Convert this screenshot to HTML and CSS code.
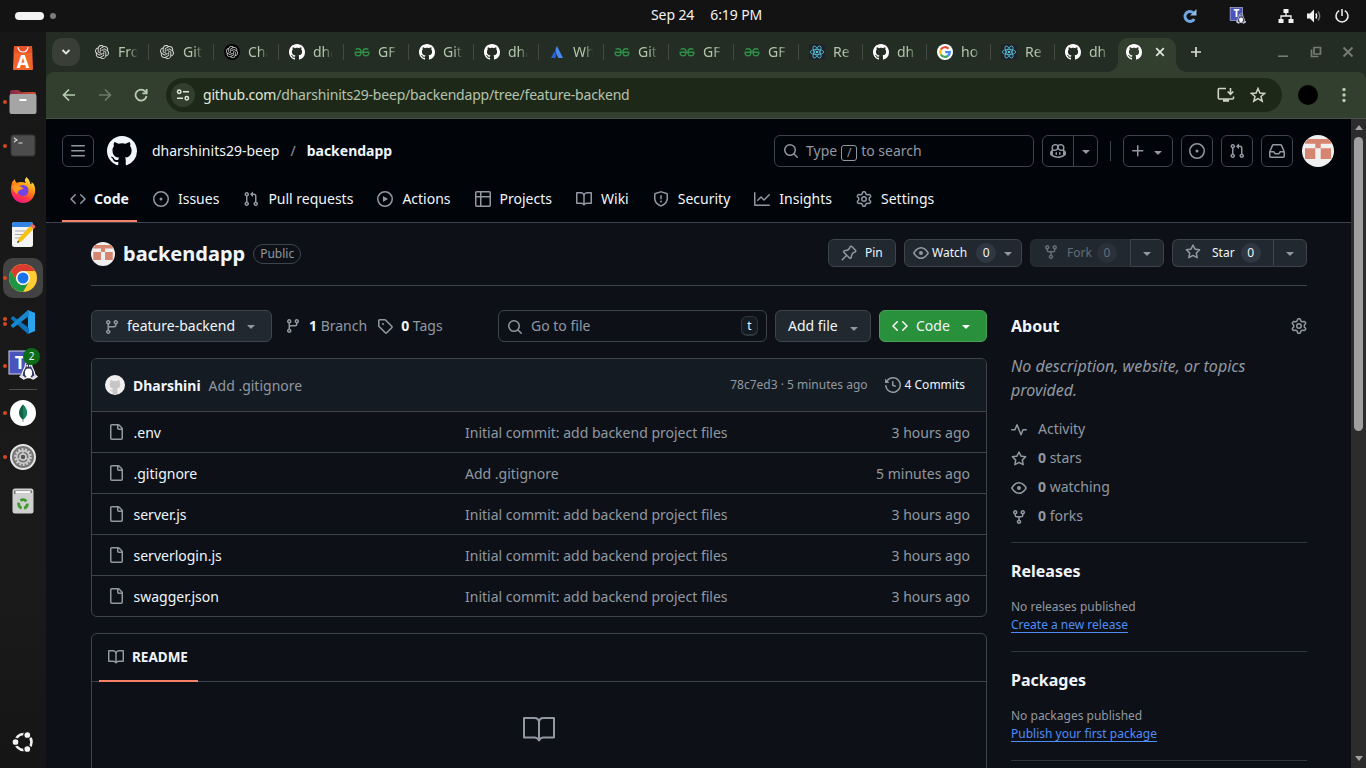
FILE: index.html
```html
<!DOCTYPE html>
<html lang="en">
<head>
<meta charset="utf-8">
<title>backendapp</title>
<link rel="stylesheet" href="styles.css">
</head>
<body>
<svg class="sprite" width="0" height="0">
<symbol id="mark" viewBox="0 0 16 16"><path d="M8 0C3.58 0 0 3.58 0 8c0 3.54 2.29 6.53 5.47 7.59.4.07.55-.17.55-.38 0-.19-.01-.82-.01-1.49-2.01.37-2.53-.49-2.69-.94-.09-.23-.48-.94-.82-1.13-.28-.15-.68-.52-.01-.53.63-.01 1.08.58 1.23.82.72 1.21 1.87.87 2.33.66.07-.52.28-.87.51-1.07-1.78-.2-3.64-.89-3.64-3.95 0-.87.31-1.59.82-2.15-.08-.2-.36-1.02.08-2.12 0 0 .67-.21 2.2.82.64-.18 1.32-.27 2-.27.68 0 1.36.09 2 .27 1.53-1.04 2.2-.82 2.2-.82.44 1.1.16 1.92.08 2.12.51.56.82 1.27.82 2.15 0 3.07-1.87 3.75-3.65 3.95.29.25.54.73.54 1.48 0 1.07-.01 1.93-.01 2.2 0 .21.15.46.55.38A8.01 8.01 0 0 0 16 8c0-4.42-3.58-8-8-8Z"/></symbol>
<symbol id="openai" viewBox="0 0 24 24"><path d="M22.2819 9.8211a5.9847 5.9847 0 0 0-.5157-4.9108 6.0462 6.0462 0 0 0-6.5098-2.9A6.0651 6.0651 0 0 0 4.9807 4.1818a5.9847 5.9847 0 0 0-3.9977 2.9 6.0462 6.0462 0 0 0 .7427 7.0966 5.98 5.98 0 0 0 .511 4.9107 6.051 6.051 0 0 0 6.5146 2.9001A5.9847 5.9847 0 0 0 13.2599 24a6.0557 6.0557 0 0 0 5.7718-4.2058 5.9894 5.9894 0 0 0 3.9977-2.9001 6.0557 6.0557 0 0 0-.7475-7.0729zm-9.022 12.6081a4.4755 4.4755 0 0 1-2.8764-1.0408l.1419-.0804 4.7783-2.7582a.7948.7948 0 0 0 .3927-.6813v-6.7369l2.02 1.1686a.071.071 0 0 1 .038.052v5.5826a4.504 4.504 0 0 1-4.4945 4.4944zm-9.6607-4.1254a4.4708 4.4708 0 0 1-.5346-3.0137l.142.0852 4.783 2.7582a.7712.7712 0 0 0 .7806 0l5.8428-3.3685v2.3324a.0804.0804 0 0 1-.0332.0615L9.74 19.9502a4.4992 4.4992 0 0 1-6.1408-1.6464zM2.3408 7.8956a4.485 4.485 0 0 1 2.3655-1.9728V11.6a.7664.7664 0 0 0 .3879.6765l5.8144 3.3543-2.0201 1.1685a.0757.0757 0 0 1-.071 0l-4.8303-2.7865A4.504 4.504 0 0 1 2.3408 7.872zm16.5963 3.8558L13.1038 8.364 15.1192 7.2a.0757.0757 0 0 1 .071 0l4.8303 2.7913a4.4944 4.4944 0 0 1-.6765 8.1042v-5.6772a.79.79 0 0 0-.407-.667zm2.0107-3.0231l-.142-.0852-4.7735-2.7818a.7759.7759 0 0 0-.7854 0L9.409 9.2297V6.8974a.0662.0662 0 0 1 .0284-.0615l4.8303-2.7866a4.4992 4.4992 0 0 1 6.6802 4.66zM8.3065 12.863l-2.02-1.1638a.0804.0804 0 0 1-.038-.0567V6.0742a4.4992 4.4992 0 0 1 7.3757-3.4537l-.142.0805L8.704 5.459a.7948.7948 0 0 0-.3927.6813zm1.0976-2.3654l2.602-1.4998 2.6069 1.4998v2.9994l-2.5974 1.4997-2.6067-1.4997Z"/></symbol>
<symbol id="openai-dark" viewBox="0 0 16 16"><circle cx="8" cy="8" r="8" fill="#050505"/><use href="#openai" x="2" y="2" width="12" height="12"/></symbol>
<symbol id="geeks" viewBox="0 0 16 16"><g fill="none" stroke="#2f8d46" stroke-width="1.4"><path d="M1.6 5.6Q2.6 4.7 4.2 4.7 7 4.7 7 8.2T4.2 11.7Q1.6 11.7 1.2 9.6V8.2H14.8V9.6Q14.4 11.7 11.8 11.7 9 11.7 9 8.2T11.8 4.7Q13.4 4.7 14.4 5.6"/></g></symbol>
<symbol id="atlassian" viewBox="0 0 16 16"><path d="M5.3 7.6 2 14h4.4c1-2.100.6-4.600-1.100-6.400Z" fill="#2563dc"/><path d="M8 2C5.900 5.300 6.200 7.900 7.400 10.200L9.500 14H14Z" fill="#4688f4"/></symbol>
<symbol id="react" viewBox="0 0 16 16"><rect width="16" height="16" rx="2" fill="#20232a"/><g fill="none" stroke="#58c4dc" stroke-width=".8"><ellipse cx="8" cy="8" rx="6.700" ry="2.600"/><ellipse cx="8" cy="8" rx="6.700" ry="2.600" transform="rotate(60 8 8)"/><ellipse cx="8" cy="8" rx="6.700" ry="2.600" transform="rotate(120 8 8)"/></g><circle cx="8" cy="8" r="1.300" fill="#58c4dc"/></symbol>
<symbol id="google" viewBox="0 0 16 16"><circle cx="8" cy="8" r="8" fill="#fff"/><g fill="none" stroke-width="2.200"><path d="M11.500 4.700A4.800 4.800 0 0 0 3.900 5.600" stroke="#ea4335"/><path d="M3.900 5.600A4.800 4.800 0 0 0 3.900 10.500" stroke="#fbbc05"/><path d="M3.900 10.500A4.800 4.800 0 0 0 11.200 11.600" stroke="#34a853"/><path d="M11.200 11.600A4.800 4.800 0 0 0 12.800 8.200H8.200" stroke="#4285f4"/></g></symbol>
<symbol id="bars" viewBox="0 0 16 16"><path d="M1 2.750A.75.75 0 0 1 1.750 2h12.500a.75.75 0 0 1 0 1.500H1.750A.75.75 0 0 1 1 2.750Zm0 5A.75.75 0 0 1 1.750 7h12.500a.75.75 0 0 1 0 1.500H1.750A.75.75 0 0 1 1 7.750ZM1.750 12h12.500a.75.75 0 0 1 0 1.500H1.750a.75.75 0 0 1 0-1.500Z"/></symbol>
<symbol id="code" viewBox="0 0 16 16"><path d="m11.28 3.22 4.25 4.25a.75.75 0 0 1 0 1.06l-4.25 4.25a.749.749 0 0 1-1.275-.326.749.749 0 0 1 .215-.734L13.94 8l-3.72-3.72a.749.749 0 0 1 .326-1.275.749.749 0 0 1 .734.215Zm-6.56 0a.751.751 0 0 1 1.042.018.751.751 0 0 1 .018 1.042L2.06 8l3.72 3.72a.749.749 0 0 1-.326 1.275.749.749 0 0 1-.734-.215L.47 8.53a.75.75 0 0 1 0-1.06Z"/></symbol>
<symbol id="issue" viewBox="0 0 16 16"><path d="M8 9.5a1.5 1.5 0 1 0 0-3 1.5 1.5 0 0 0 0 3Z"/><path d="M8 0a8 8 0 1 1 0 16A8 8 0 0 1 8 0ZM1.5 8a6.5 6.5 0 1 0 13 0 6.5 6.5 0 0 0-13 0Z"/></symbol>
<symbol id="pr" viewBox="0 0 16 16"><path d="M1.5 3.25a2.25 2.25 0 1 1 3 2.122v5.256a2.251 2.251 0 1 1-1.5 0V5.372A2.25 2.25 0 0 1 1.5 3.25Zm5.677-.177L9.573.677A.25.25 0 0 1 10 .854V2.5h1A2.5 2.5 0 0 1 13.5 5v5.628a2.251 2.251 0 1 1-1.5 0V5a1 1 0 0 0-1-1h-1v1.646a.25.25 0 0 1-.427.177L7.177 3.427a.25.25 0 0 1 0-.354ZM3.75 2.5a.75.75 0 1 0 0 1.5.75.75 0 0 0 0-1.5Zm0 9.5a.75.75 0 1 0 0 1.5.75.75 0 0 0 0-1.5Zm8.25.75a.75.75 0 1 0 1.5 0 .75.75 0 0 0-1.5 0Z"/></symbol>
<symbol id="play" viewBox="0 0 16 16"><path d="M8 0a8 8 0 1 1 0 16A8 8 0 0 1 8 0ZM1.5 8a6.5 6.5 0 1 0 13 0 6.5 6.5 0 0 0-13 0Zm4.879-2.773 4.264 2.559a.25.25 0 0 1 0 .428l-4.264 2.559A.25.25 0 0 1 6 10.559V5.442a.25.25 0 0 1 .379-.215Z"/></symbol>
<symbol id="table" viewBox="0 0 16 16"><path d="M0 1.75C0 .784.784 0 1.75 0h12.5C15.216 0 16 .784 16 1.75v12.5A1.75 1.75 0 0 1 14.25 16H1.75A1.75 1.75 0 0 1 0 14.25ZM6.5 6.5v8h7.75a.25.25 0 0 0 .25-.25V6.5Zm8-1.5V1.75a.25.25 0 0 0-.25-.25H6.5V5Zm-13 1.5v7.75c0 .138.112.25.25.25H5v-8ZM5 5V1.5H1.75a.25.25 0 0 0-.25.25V5Z"/></symbol>
<symbol id="book" viewBox="0 0 16 16"><path d="M0 1.75A.75.75 0 0 1 .75 1h4.253c1.227 0 2.317.59 3 1.501A3.743 3.743 0 0 1 11.006 1h4.245a.75.75 0 0 1 .75.75v10.5a.75.75 0 0 1-.75.75h-4.507a2.25 2.25 0 0 0-1.591.659l-.622.621a.75.75 0 0 1-1.06 0l-.622-.621A2.25 2.25 0 0 0 5.258 13H.75a.75.75 0 0 1-.75-.75Zm7.251 10.324.004-5.073-.002-2.253A2.25 2.25 0 0 0 5.003 2.5H1.5v9h3.757a3.75 3.75 0 0 1 1.994.574ZM8.755 4.75l-.004 7.322a3.752 3.752 0 0 1 1.992-.572H14.5v-9h-3.495a2.25 2.25 0 0 0-2.25 2.25Z"/></symbol>
<symbol id="book-lg" viewBox="0 0 32 32"><path d="M1 5H11.500Q16 5 16 9.500V27.500Q14.500 24.500 11.500 24.500H1ZM31 5H20.500Q16 5 16 9.500V27.500Q17.500 24.500 20.500 24.500H31Z" fill="none" stroke="currentColor" stroke-width="2" stroke-linejoin="round"/></symbol>
<symbol id="shield" viewBox="0 0 16 16"><path d="M7.467.133a1.748 1.748 0 0 1 1.066 0l5.25 1.68A1.75 1.75 0 0 1 15 3.48V7c0 1.566-.32 3.182-1.303 4.682-.983 1.498-2.585 2.813-5.032 3.855a1.697 1.697 0 0 1-1.33 0c-2.447-1.042-4.049-2.357-5.032-3.855C1.32 10.182 1 8.566 1 7V3.48a1.75 1.75 0 0 1 1.217-1.667Zm.61 1.429a.25.25 0 0 0-.153 0l-5.25 1.68a.25.25 0 0 0-.174.238V7c0 1.358.275 2.666 1.057 3.86.784 1.194 2.121 2.34 4.366 3.297a.196.196 0 0 0 .154 0c2.245-.956 3.582-2.104 4.366-3.298C13.225 9.666 13.5 8.36 13.5 7V3.48a.251.251 0 0 0-.174-.237l-5.25-1.68ZM8.75 4.75v3a.75.75 0 0 1-1.5 0v-3a.75.75 0 0 1 1.5 0ZM9 10.5a1 1 0 1 1-2 0 1 1 0 0 1 2 0Z"/></symbol>
<symbol id="graph" viewBox="0 0 16 16"><path d="M1.5 1.75V13.5h13.75a.75.75 0 0 1 0 1.5H.75a.75.75 0 0 1-.75-.75V1.75a.75.75 0 0 1 1.5 0Zm14.28 2.53-5.25 5.25a.75.75 0 0 1-1.06 0L7 7.06 4.28 9.78a.751.751 0 0 1-1.042-.018.751.751 0 0 1-.018-1.042l3.25-3.25a.75.75 0 0 1 1.06 0L10 7.94l4.72-4.72a.751.751 0 0 1 1.042.018.751.751 0 0 1 .018 1.042Z"/></symbol>
<symbol id="gear" viewBox="0 0 16 16"><path d="M8 0a8.2 8.2 0 0 1 .701.031C9.444.095 9.99.645 10.16 1.29l.288 1.107c.018.066.079.158.212.224.231.114.454.243.668.386.123.082.233.09.299.071l1.103-.303c.644-.176 1.392.021 1.82.63.27.385.506.792.704 1.218.315.675.111 1.422-.364 1.891l-.814.806c-.049.048-.098.147-.088.294.016.257.016.515 0 .772-.01.147.038.246.088.294l.814.806c.475.469.679 1.216.364 1.891a7.977 7.977 0 0 1-.704 1.217c-.428.61-1.176.807-1.82.63l-1.102-.302c-.067-.019-.177-.011-.3.071a5.909 5.909 0 0 1-.668.386c-.133.066-.194.158-.211.224l-.29 1.106c-.168.646-.715 1.196-1.458 1.26a8.006 8.006 0 0 1-1.402 0c-.743-.064-1.289-.614-1.458-1.26l-.289-1.106c-.018-.066-.079-.158-.212-.224a5.738 5.738 0 0 1-.668-.386c-.123-.082-.233-.09-.299-.071l-1.103.303c-.644.176-1.392-.021-1.82-.63a8.12 8.12 0 0 1-.704-1.218c-.315-.675-.111-1.422.363-1.891l.815-.806c.05-.048.098-.147.088-.294a6.214 6.214 0 0 1 0-.772c.01-.147-.038-.246-.088-.294l-.815-.806C.635 6.045.431 5.298.746 4.623a7.92 7.92 0 0 1 .704-1.217c.428-.61 1.176-.807 1.82-.63l1.102.302c.067.019.177.011.3-.071.214-.143.437-.272.668-.386.133-.066.194-.158.211-.224l.29-1.106C6.009.645 6.556.095 7.299.03 7.53.01 7.764 0 8 0Zm-.571 1.525c-.036.003-.108.036-.137.146l-.289 1.105c-.147.561-.549.967-.998 1.189-.173.086-.34.183-.5.29-.417.278-.97.423-1.529.27l-1.103-.303c-.109-.03-.175.016-.195.045-.22.312-.412.644-.573.99-.014.031-.021.11.059.19l.815.806c.411.406.562.957.53 1.456a4.709 4.709 0 0 0 0 .582c.032.499-.119 1.05-.53 1.456l-.815.806c-.081.08-.073.159-.059.19.162.346.353.677.573.989.02.03.085.076.195.046l1.102-.303c.56-.153 1.113-.008 1.53.27.161.107.328.204.501.29.447.222.85.629.997 1.189l.289 1.105c.029.109.101.143.137.146a6.6 6.6 0 0 0 1.142 0c.036-.003.108-.036.137-.146l.289-1.105c.147-.561.549-.967.998-1.189.173-.086.34-.183.5-.29.417-.278.97-.423 1.529-.27l1.103.303c.109.029.175-.016.195-.045.22-.313.411-.644.573-.99.014-.031.021-.11-.059-.19l-.815-.806c-.411-.406-.562-.957-.53-1.456a4.709 4.709 0 0 0 0-.582c-.032-.499.119-1.05.53-1.456l.815-.806c.081-.08.073-.159.059-.19a6.464 6.464 0 0 0-.573-.989c-.02-.03-.085-.076-.195-.046l-1.102.303c-.56.153-1.113.008-1.53-.27a4.44 4.44 0 0 0-.501-.29c-.447-.222-.85-.629-.997-1.189l-.289-1.105c-.029-.11-.101-.143-.137-.146a6.6 6.6 0 0 0-1.142 0ZM11 8a3 3 0 1 1-6 0 3 3 0 0 1 6 0ZM9.5 8a1.5 1.5 0 1 0-3.001.001A1.5 1.5 0 0 0 9.5 8Z"/></symbol>
<symbol id="search" viewBox="0 0 16 16"><path d="M10.68 11.74a6 6 0 0 1-7.922-8.982 6 6 0 0 1 8.982 7.922l3.04 3.04a.749.749 0 0 1-.326 1.275.749.749 0 0 1-.734-.215ZM11.5 7a4.499 4.499 0 1 0-8.997 0A4.499 4.499 0 0 0 11.5 7Z"/></symbol>
<symbol id="tri" viewBox="0 0 16 16"><path d="m4.427 7.427 3.396 3.396a.25.25 0 0 0 .354 0l3.396-3.396A.25.25 0 0 0 11.396 7H4.604a.25.25 0 0 0-.177.427Z"/></symbol>
<symbol id="plus" viewBox="0 0 16 16"><path d="M7.75 2a.75.75 0 0 1 .75.75V7h4.25a.75.75 0 0 1 0 1.5H8.5v4.25a.75.75 0 0 1-1.5 0V8.5H2.75a.75.75 0 0 1 0-1.5H7V2.75A.75.75 0 0 1 7.75 2Z"/></symbol>
<symbol id="inbox" viewBox="0 0 16 16"><path d="M2.8 2.06A1.75 1.75 0 0 1 4.41 1h7.18c.7 0 1.333.417 1.61 1.06l2.74 6.395c.04.093.06.194.06.295v4.5A1.75 1.75 0 0 1 14.25 15H1.75A1.75 1.75 0 0 1 0 13.25v-4.5c0-.101.02-.202.06-.295Zm1.61.44a.25.25 0 0 0-.23.152L1.887 8H4.75a.75.75 0 0 1 .6.3L6.625 10h2.75l1.275-1.7a.75.75 0 0 1 .6-.3h2.863L11.82 2.652a.25.25 0 0 0-.23-.152Zm10.09 7h-2.875l-1.275 1.7a.75.75 0 0 1-.6.3h-3.5a.75.75 0 0 1-.6-.3L4.375 9.5H1.5v3.75c0 .138.112.25.25.25h12.5a.25.25 0 0 0 .25-.25Z"/></symbol>
<symbol id="copilot" viewBox="0 0 16 16"><path d="M7.998 15.035c-4.562 0-7.873-2.914-7.998-3.749V9.338c.085-.628.677-1.686 1.588-2.065.013-.07.024-.143.036-.218.029-.183.06-.384.126-.612-.201-.508-.254-1.084-.254-1.656 0-.87.128-1.769.693-2.484.579-.733 1.494-1.124 2.724-1.261 1.206-.134 2.262.034 2.944.765.05.053.096.108.139.165.044-.057.094-.112.143-.165.682-.731 1.738-.899 2.944-.765 1.23.137 2.145.528 2.724 1.261.566.715.693 1.614.693 2.484 0 .572-.053 1.148-.254 1.656.066.228.098.429.126.612.012.076.024.148.037.218.924.385 1.522 1.471 1.591 2.095v1.872c0 .766-3.351 3.795-8.002 3.795Zm0-1.485c2.28 0 4.584-1.11 5.002-1.433V7.862l-.023-.116c-.49.21-1.075.291-1.727.291-1.146 0-2.059-.327-2.71-.991A3.222 3.222 0 0 1 8 6.303a3.24 3.24 0 0 1-.544.743c-.65.664-1.563.991-2.71.991-.652 0-1.236-.081-1.727-.291l-.023.116v4.255c.419.323 2.722 1.433 5.002 1.433ZM6.762 2.83c-.193-.206-.637-.413-1.682-.297-1.019.113-1.479.404-1.713.7-.247.312-.369.789-.369 1.554 0 .793.129 1.171.308 1.371.162.181.519.379 1.442.379.853 0 1.339-.235 1.638-.54.315-.322.527-.827.617-1.553.117-.935-.037-1.395-.241-1.614Zm4.155-.297c-1.044-.116-1.488.091-1.681.297-.204.219-.359.679-.242 1.614.091.726.303 1.231.618 1.553.299.305.784.54 1.638.54.922 0 1.28-.198 1.442-.379.179-.2.308-.578.308-1.371 0-.765-.123-1.242-.37-1.554-.233-.296-.693-.587-1.713-.7Z"/><path d="M6.25 9.037a.75.75 0 0 1 .75.75v1.501a.75.75 0 0 1-1.5 0V9.787a.75.75 0 0 1 .75-.75Zm4.25.75v1.501a.75.75 0 0 1-1.5 0V9.787a.75.75 0 0 1 1.5 0Z"/></symbol>
<symbol id="pin" viewBox="0 0 16 16"><path d="m11.294.984 3.722 3.722a1.75 1.75 0 0 1-.504 2.826l-1.327.613a3.089 3.089 0 0 0-1.707 2.084l-.584 2.454c-.317 1.332-1.972 1.8-2.94.832L5.75 11.311 1.78 15.28a.749.749 0 1 1-1.06-1.06l3.969-3.97-2.204-2.204c-.968-.968-.5-2.623.832-2.94l2.454-.584a3.08 3.08 0 0 0 2.084-1.707l.613-1.327a1.75 1.75 0 0 1 2.826-.504ZM6.283 9.723l2.732 2.731a.25.25 0 0 0 .42-.119l.584-2.454a4.586 4.586 0 0 1 2.537-3.098l1.328-.613a.25.25 0 0 0 .072-.404l-3.722-3.722a.25.25 0 0 0-.404.072l-.613 1.328a4.584 4.584 0 0 1-3.098 2.537l-2.454.584a.25.25 0 0 0-.119.42l2.731 2.732Z"/></symbol>
<symbol id="eye" viewBox="0 0 16 16"><path d="M8 2c1.981 0 3.671.992 4.933 2.078 1.27 1.091 2.187 2.345 2.637 3.023a1.62 1.62 0 0 1 0 1.798c-.45.678-1.367 1.932-2.637 3.023C11.67 13.008 9.981 14 8 14c-1.981 0-3.671-.992-4.933-2.078C1.797 10.83.88 9.576.43 8.898a1.62 1.62 0 0 1 0-1.798c.45-.677 1.367-1.931 2.637-3.022C4.33 2.992 6.019 2 8 2ZM1.679 7.932a.12.12 0 0 0 0 .136c.411.622 1.241 1.75 2.366 2.717C5.176 11.758 6.527 12.5 8 12.5c1.473 0 2.825-.742 3.955-1.715 1.124-.967 1.954-2.096 2.366-2.717a.12.12 0 0 0 0-.136c-.412-.621-1.242-1.75-2.366-2.717C10.824 4.242 9.473 3.5 8 3.5c-1.473 0-2.825.742-3.955 1.715-1.124.967-1.954 2.096-2.366 2.717ZM8 10a2 2 0 1 1-.001-3.999A2 2 0 0 1 8 10Z"/></symbol>
<symbol id="fork" viewBox="0 0 16 16"><path d="M5 5.372v.878c0 .414.336.75.75.75h4.5a.75.75 0 0 0 .75-.75v-.878a2.25 2.25 0 1 1 1.5 0v.878a2.25 2.25 0 0 1-2.25 2.25h-1.5v2.128a2.251 2.251 0 1 1-1.5 0V8.5h-1.5A2.25 2.25 0 0 1 3.5 6.25v-.878a2.25 2.25 0 1 1 1.5 0ZM5 3.25a.75.75 0 1 0-1.5 0 .75.75 0 0 0 1.5 0Zm6.75.75a.75.75 0 1 0 0-1.5.75.75 0 0 0 0 1.5Zm-3 8.75a.75.75 0 1 0-1.5 0 .75.75 0 0 0 1.5 0Z"/></symbol>
<symbol id="star" viewBox="0 0 16 16"><path d="M8 .25a.75.75 0 0 1 .673.418l1.882 3.815 4.21.612a.75.75 0 0 1 .416 1.279l-3.046 2.97.719 4.192a.751.751 0 0 1-1.088.791L8 12.347l-3.766 1.98a.75.75 0 0 1-1.088-.79l.72-4.194L.818 6.374a.75.75 0 0 1 .416-1.28l4.21-.611L7.327.668A.75.75 0 0 1 8 .25Zm0 2.445L6.615 5.5a.75.75 0 0 1-.564.41l-3.097.45 2.24 2.184a.75.75 0 0 1 .216.664l-.528 3.084 2.769-1.456a.75.75 0 0 1 .698 0l2.77 1.456-.53-3.084a.75.75 0 0 1 .216-.664l2.24-2.183-3.096-.45a.75.75 0 0 1-.564-.41L8 2.694Z"/></symbol>
<symbol id="branch" viewBox="0 0 16 16"><path d="M9.5 3.25a2.25 2.25 0 1 1 3 2.122V6A2.5 2.5 0 0 1 10 8.5H6a1 1 0 0 0-1 1v1.128a2.251 2.251 0 1 1-1.5 0V5.372a2.25 2.25 0 1 1 1.5 0v1.836A2.493 2.493 0 0 1 6 7h4a1 1 0 0 0 1-1v-.628A2.25 2.25 0 0 1 9.5 3.25Zm-6 0a.75.75 0 1 0 1.5 0 .75.75 0 0 0-1.5 0Zm8.25-.75a.75.75 0 1 0 0 1.5.75.75 0 0 0 0-1.5ZM4.25 12a.75.75 0 1 0 0 1.5.75.75 0 0 0 0-1.5Z"/></symbol>
<symbol id="tag" viewBox="0 0 16 16"><path d="M1 7.775V2.75C1 1.784 1.784 1 2.75 1h5.025c.464 0 .91.184 1.238.513l6.25 6.25a1.75 1.75 0 0 1 0 2.474l-5.026 5.026a1.75 1.75 0 0 1-2.474 0l-6.25-6.25A1.752 1.752 0 0 1 1 7.775Zm1.5 0c0 .066.026.13.073.177l6.25 6.25a.25.25 0 0 0 .354 0l5.025-5.025a.25.25 0 0 0 0-.354l-6.25-6.25a.25.25 0 0 0-.177-.073H2.75a.25.25 0 0 0-.25.25ZM6 5a1 1 0 1 1 0 2 1 1 0 0 1 0-2Z"/></symbol>
<symbol id="history" viewBox="0 0 16 16"><path d="m.427 1.927 1.215 1.215a8.002 8.002 0 1 1-1.6 5.685.75.75 0 1 1 1.493-.154 6.5 6.5 0 1 0 1.18-4.458l1.358 1.358A.25.25 0 0 1 3.896 6H.25A.25.25 0 0 1 0 5.75V2.104a.25.25 0 0 1 .427-.177ZM7.75 4a.75.75 0 0 1 .75.75v2.992l2.028.812a.75.75 0 0 1-.557 1.392l-2.5-1A.751.751 0 0 1 7 8.25v-3.5A.75.75 0 0 1 7.75 4Z"/></symbol>
<symbol id="file" viewBox="0 0 16 16"><path d="M2 1.75C2 .784 2.784 0 3.75 0h6.586c.464 0 .909.184 1.237.513l2.914 2.914c.329.328.513.773.513 1.237v9.586A1.75 1.75 0 0 1 13.25 16h-9.5A1.75 1.75 0 0 1 2 14.25Zm1.75-.25a.25.25 0 0 0-.25.25v12.5c0 .138.112.25.25.25h9.5a.25.25 0 0 0 .25-.25V6h-2.75A1.75 1.75 0 0 1 9 4.25V1.5Zm6.75.062V4.25c0 .138.112.25.25.25h2.688l-.011-.013-2.914-2.914-.013-.011Z"/></symbol>
<symbol id="pulse" viewBox="0 0 16 16"><path d="M6 2c.306 0 .582.187.696.471L10 10.731l1.304-3.26A.751.751 0 0 1 12 7h3.25a.75.75 0 0 1 0 1.5h-2.742l-1.812 4.528a.751.751 0 0 1-1.392 0L6 4.77 4.696 8.03A.75.75 0 0 1 4 8.5H.75a.75.75 0 0 1 0-1.5h2.742l1.812-4.529A.751.751 0 0 1 6 2Z"/></symbol>
<symbol id="identicon" viewBox="0 0 32 32"><circle cx="16" cy="16" r="16" fill="#f0f0f0"/><path d="M5 4h22v4H5zM2.500 8h5v0h16.500v0H29.500v0H2.500zM13.300 8h5.400v5.300h-5.400zM3 13.300h10.300v10.700H3zM18.700 13.300H29v10.700H18.700zM3 6h26v2.700H3z" fill="#d68571"/></symbol>
<symbol id="tux" viewBox="0 0 20 20"><path d="M10 1C7 1 6.500 3.500 6.500 6 6 8 3.500 10 3.500 14L1 16.500 5 19 8 17.500H12L15 19 19 16.500 16.500 14C16.500 10 14 8 13.500 6 13.500 3.500 13 1 10 1Z" fill="#34355f" stroke="#fff" stroke-width="1.200"/><ellipse cx="10" cy="12.500" rx="3.800" ry="4.500" fill="#fff"/><circle cx="8.600" cy="5" r="1" fill="#fff"/><circle cx="11.400" cy="5" r="1" fill="#fff"/><path d="M3 14.500 6.500 17 4.500 18.300 2 16.500ZM17 14.500 13.500 17 15.500 18.300 18 16.500Z" fill="#e6e7fa"/></symbol>
<symbol id="teams" viewBox="0 0 32 32"><rect x="2" y="1" width="22" height="23" fill="#4b53bc" stroke="#cfd1f4"/><text x="13" y="18.500" text-anchor="middle" class="teams-t">T</text><use href="#tux" x="12" y="11" width="19" height="19"/></symbol>
</svg>

<header class="sysbar">
  <div class="workspaces"><i class="ws-active"></i><i class="ws-dot"></i></div>
  <div class="clock"><span>Sep 24</span><span>6:19 PM</span></div>
  <div class="tray">
    <svg class="tray-sync" width="16" height="16" viewBox="0 0 16 16"><path d="M12.300 11A5 5 0 1 1 11.200 4.600" fill="none" stroke="#6ea6df" stroke-width="3"/><path d="M8.200 7.400H14.500V1Z" fill="#8fbdea"/></svg>
    <svg class="tray-teams" width="18" height="18"><use href="#teams"/></svg>
    <svg class="tray-net" width="16" height="16" viewBox="0 0 16 16" fill="#f2f2f2"><path d="M5.500 1h5v4h-5zM.5 11h5v4h-5zM10.500 11h5v4h-5z"/><path d="M8 5V8M3 11V8H13V11" fill="none" stroke="#f2f2f2" stroke-width="1.300"/></svg>
    <svg class="tray-vol" width="16" height="16" viewBox="0 0 16 16"><path d="M1 5.500H4L8 1.500V14.500L4 10.500H1Z" fill="#f2f2f2"/><path d="M9.800 5.500Q11.500 8 9.800 10.500" fill="none" stroke="#f2f2f2" stroke-width="1.400"/><path d="M12 3.500Q15.500 8 12 12.500" fill="none" stroke="#777" stroke-width="1.400"/></svg>
    <svg width="16" height="16" viewBox="0 0 16 16" fill="none" stroke="#f2f2f2" stroke-width="1.500"><path d="M5.200 2.700A6 6 0 1 0 10.800 2.700M8 1V8"/></svg>
  </div>
</header>

<div class="desktop">
<aside class="dock">
  <div class="app"><svg width="22" height="26" viewBox="0 0 22 26"><path d="M2 1H20L21 24Q21 25 20 25H2Q1 25 1 24Z" fill="#f0642c"/><path d="M2 1H20L20.300 8H1.700Z" fill="#e8502a"/><path d="M6 2Q6.500 7 11 7T16 2" fill="none" stroke="#fff" stroke-width="1.200"/><text x="11" y="22.500" text-anchor="middle" class="software-a">A</text></svg></div>
  <div class="app on"><svg width="28" height="26" viewBox="0 0 28 26"><defs><linearGradient id="fg"><stop stop-color="#7e2749"/><stop offset="1" stop-color="#d9532c"/></linearGradient></defs><path d="M1 3Q1 1 3 1H9L12 3H25Q27 3 27 5V12H1Z" fill="url(#fg)"/><rect x=".500" y="5" width="27" height="20" rx="2" fill="#a5a5a5"/><rect x="10.500" y="10" width="7" height="2" fill="#fff"/></svg></div>
  <div class="app on"><svg width="26" height="24" viewBox="0 0 26 24"><rect x="1" y="1" width="24" height="21" rx="2.500" fill="#4c4c4c" stroke="#353535"/><path d="M4 4 7 6 4 8M8.500 9H12.500" fill="none" stroke="#e0e0e0" stroke-width="1.100"/></svg></div>
  <div class="app"><svg width="26" height="26" viewBox="0 0 26 26"><defs><linearGradient id="ff" x1=".8" y1="0" x2=".3" y2="1"><stop stop-color="#fff44f"/><stop offset=".4" stop-color="#ff980e"/><stop offset=".75" stop-color="#ff3647"/><stop offset="1" stop-color="#e31587"/></linearGradient></defs><path d="M16.500 0C15 2 14 4 16 6Q10 4 7 6Q4.500 4.500 5 2Q2 4 1.500 8C-1 16 4 26 13 26S27 17 24.500 9Q24 6.500 21.500 5Q22 8 20.500 7Q19.500 2.500 16.500 0Z" fill="url(#ff)"/><circle cx="13" cy="13.500" r="5.500" fill="#7543e5"/><path d="M2 9Q7 6.500 11 10L14 11.500 10 13Q8 14 7 17Q3 15 2 9Z" fill="#ff9a1f"/></svg></div>
  <div class="app"><svg width="26" height="27" viewBox="0 0 26 27"><rect x="2" y="1" width="21" height="25" rx="2.500" fill="#f4f4f4"/><path d="M2 3.500Q2 1 4.500 1H20.500Q23 1 23 3.500V6H2Z" fill="#3584e4"/><path d="M5 10H19M5 13.500H16M5 17H12" stroke="#a9a9a9"/><path d="M7 22 9 17 20 5 23.500 8 12 20Z" fill="#f5c211"/><path d="M20 5 22 3Q25 3.500 25.500 6L23.500 8Z" fill="#ed6a67"/><path d="M7 22 8 19.500 9.500 21Z" fill="#333"/></svg></div>
  <div class="app on"><div class="app-focus"><svg width="28" height="28" viewBox="0 0 28 28"><circle cx="14" cy="14" r="14" fill="#fc3"/><path d="M1.876 7A14 14 0 0 1 26.124 7H14A7 7 0 0 0 7.938 17.500Z" fill="#db3a2f"/><path d="M1.876 7A14 14 0 0 0 14 28L20.060 17.500A7 7 0 0 1 7.938 17.500Z" fill="#1e9445"/><circle cx="14" cy="14" r="6.900" fill="#fff"/><circle cx="14" cy="14" r="5.500" fill="#1a73e8"/></svg></div></div>
  <div class="app on two"><svg width="26" height="26" viewBox="0 0 26 26"><path d="M18 1 25 4V22L18 25Z" fill="#2aa4ea"/><path d="M1 9 3 7 19 19V24.500L18 25 1 10Z" fill="#0f72b8"/><path d="M1 17 3 19 19 7V1.500L18 1 1 16Z" fill="#1688cf"/></svg></div>
  <div class="app on"><svg width="32" height="32"><use href="#teams"/></svg><b class="app-badge">2</b></div>
  <div class="dock-line"></div>
  <div class="app on"><svg width="26" height="26" viewBox="0 0 26 26"><circle cx="13" cy="13" r="13" fill="#fff"/><path d="M13 4.500C18.500 10 18 16 13.300 19.500V22H12.700V19.500C8 16 7.500 10 13 4.500Z" fill="#116149"/><path d="M13 4.500C18.500 10 18 16 13.300 19.500Z" fill="#17885b"/></svg></div>
  <div class="app on"><svg width="26" height="26" viewBox="0 0 26 26"><circle cx="13" cy="13" r="12" fill="#777" stroke="#e5e5e5" stroke-width="2"/><circle cx="13" cy="13" r="7.800" fill="none" stroke="#d0d0d0" stroke-width="2" stroke-dasharray="2 1.500"/><circle cx="13" cy="13" r="6.300" fill="none" stroke="#d0d0d0" stroke-width="1.500"/><circle cx="13" cy="13" r="3" fill="#555" stroke="#d0d0d0" stroke-width="1.500"/><path d="M13 7V10M7.500 15.500 10.500 14M18.500 15.500 15.500 14" stroke="#d0d0d0" stroke-width="1.300"/></svg></div>
  <div class="app"><svg width="22" height="26" viewBox="0 0 22 26"><rect x=".5" y=".5" width="21" height="25" rx="2.500" fill="#cfcfcf"/><path d="M2 2.500H20V5H17V4H5L3 6H2Z" fill="#777"/><path d="M3.500 3H18.500V5H3.500Z" fill="#f5f5f5"/><circle cx="11" cy="16" r="4.300" fill="none" stroke="#3c9a2b" stroke-width="2.800" stroke-dasharray="6.500 2.500" stroke-dashoffset="1"/></svg></div>
  <div class="app launcher"><svg width="22" height="22" viewBox="0 0 22 22"><circle cx="11.500" cy="11" r="8" fill="none" stroke="#f3f3f3" stroke-width="2.600"/><g fill="#f3f3f3" stroke="#161616" stroke-width="1.300"><circle cx="3.500" cy="11" r="3.500"/><circle cx="15.300" cy="4" r="3.500"/><circle cx="15.300" cy="18" r="3.500"/></g></svg></div>
</aside>

<main class="browser">
  <div class="tabstrip">
    <button class="tab-search"><svg width="12" height="12" viewBox="0 0 12 12"><path d="M2.500 4 6 7.500 9.500 4" fill="none" stroke="#e2e6de" stroke-width="1.800"/></svg></button>
    <div class="tab oa"><svg><use href="#openai"/></svg><span>Fro</span></div>
    <div class="tab oa"><svg><use href="#openai"/></svg><span>Git</span></div>
    <div class="tab od"><svg><use href="#openai-dark"/></svg><span>Cha</span></div>
    <div class="tab"><svg><use href="#mark"/></svg><span>dha</span></div>
    <div class="tab"><svg><use href="#geeks"/></svg><span>GF</span></div>
    <div class="tab"><svg><use href="#mark"/></svg><span>Git</span></div>
    <div class="tab"><svg><use href="#mark"/></svg><span>dha</span></div>
    <div class="tab"><svg><use href="#atlassian"/></svg><span>Wh</span></div>
    <div class="tab"><svg><use href="#geeks"/></svg><span>Git</span></div>
    <div class="tab"><svg><use href="#geeks"/></svg><span>GF</span></div>
    <div class="tab"><svg><use href="#geeks"/></svg><span>GF</span></div>
    <div class="tab slim"><svg><use href="#react"/></svg><span>Re</span></div>
    <div class="tab slim"><svg><use href="#mark"/></svg><span>dh</span></div>
    <div class="tab slim"><svg><use href="#google"/></svg><span>ho</span></div>
    <div class="tab slim"><svg><use href="#react"/></svg><span>Re</span></div>
    <div class="tab slim last"><svg><use href="#mark"/></svg><span>dh</span></div>
    <div class="tab-active"><svg width="16" height="16"><use href="#mark"/></svg><svg width="10" height="10" viewBox="0 0 10 10"><path d="M1.200 1.200 8.800 8.800M8.800 1.200 1.200 8.800" stroke="#dfe5da" stroke-width="1.700"/></svg></div>
    <svg class="new-tab" width="12" height="12" viewBox="0 0 12 12"><path d="M6 1V11M1 6H11" stroke="#d5ddcf" stroke-width="1.700"/></svg>
    <div class="win-controls">
      <svg width="12" height="12" viewBox="0 0 12 12"><path d="M1 10.200H11" stroke="#747b71" stroke-width="1.600"/></svg>
      <svg width="12" height="12" viewBox="0 0 12 12" fill="none" stroke="#747b71" stroke-width="1.700"><path d="M4 1.500H10.500V8H4ZM1.500 3.500V10.500H8.500"/></svg>
      <svg width="12" height="12" viewBox="0 0 12 12"><path d="M1.500 1.500 10.500 10.500M10.500 1.500 1.500 10.500" stroke="#747b71" stroke-width="2"/></svg>
    </div>
  </div>

  <div class="toolbar">
    <svg class="tb-back" width="14" height="14" viewBox="0 0 14 14" fill="none" stroke="#b7cdb0" stroke-width="1.700"><path d="M13 7H2M7 1.500 1.500 7 7 12.500"/></svg>
    <svg class="tb-fwd" width="14" height="14" viewBox="0 0 14 14" fill="none" stroke="#6d7b69" stroke-width="1.700"><path d="M1 7H12M7 1.500 12.500 7 7 12.500"/></svg>
    <svg class="tb-reload" width="14" height="14" viewBox="0 0 14 14" fill="none" stroke="#b7cdb0" stroke-width="1.800"><path d="M12.500 8A5.500 5.500 0 1 1 11.300 3.500L12.500 5M12.700 1V5.300H8.400"/></svg>
    <div class="omnibox">
      <div class="site-info"><svg width="14" height="14" viewBox="0 0 14 14" fill="none" stroke="#dfe6d9" stroke-width="1.500"><circle cx="3.200" cy="3.700" r="1.700"/><path d="M7 3.700H13M1 10.300H7"/><circle cx="10.800" cy="10.300" r="1.700"/></svg></div>
      <span class="url"><span class="host">github.com</span>/dharshinits29-beep/backendapp/tree/feature-backend</span>
      <svg class="install" width="18" height="16" viewBox="0 0 18 16" fill="none" stroke="#cdd6c6" stroke-width="1.600"><path d="M9 1.500H2.300Q1.300 1.500 1.300 2.500V11Q1.300 12 2.300 12H15.500Q16.500 12 16.500 11V9.500M13.500 1V7M10.700 4.500 13.500 7.300 16.300 4.500"/><path d="M6 13.500H12" stroke-width="2.500"/></svg>
      <svg class="bookmark" width="16" height="16" viewBox="0 0 16 16"><path d="M8 1.500 9.900 6 14.700 6.400 11 9.500 12.200 14.200 8 11.700 3.800 14.200 5 9.500 1.300 6.400 6.100 6Z" fill="none" stroke="#cdd6c6" stroke-width="1.500"/></svg>
    </div>
    <i class="profile"></i>
    <svg class="kebab" width="4" height="16" viewBox="0 0 4 16" fill="#b7cdb0"><circle cx="2" cy="2.500" r="1.700"/><circle cx="2" cy="8" r="1.700"/><circle cx="2" cy="13.500" r="1.700"/></svg>
  </div>

  <div class="viewport">
  <div class="page">
    <header class="gh-header">
      <div class="gh-top">
        <button class="sq"><svg class="ic"><use href="#bars"/></svg></button>
        <svg class="gh-logo" width="30" height="30"><use href="#mark"/></svg>
        <div class="crumbs"><span>dharshinits29-beep</span><i>/</i><b>backendapp</b></div>
        <div class="gh-search"><svg class="ic"><use href="#search"/></svg><span>Type</span><kbd>/</kbd><span>to search</span></div>
        <div class="copilot"><span><svg class="ic"><use href="#copilot"/></svg></span><span><svg class="ic"><use href="#tri"/></svg></span></div>
        <i class="vsep"></i>
        <button class="sq create"><svg class="ic"><use href="#plus"/></svg><svg class="ic"><use href="#tri"/></svg></button>
        <button class="sq"><svg class="ic"><use href="#issue"/></svg></button>
        <button class="sq"><svg class="ic"><use href="#pr"/></svg></button>
        <button class="sq"><svg class="ic"><use href="#inbox"/></svg></button>
        <svg class="avatar" width="32" height="32"><use href="#identicon"/></svg>
      </div>
      <nav class="gh-nav">
        <a class="current"><svg class="ic"><use href="#code"/></svg>Code</a>
        <a><svg class="ic"><use href="#issue"/></svg>Issues</a>
        <a><svg class="ic"><use href="#pr"/></svg>Pull requests</a>
        <a><svg class="ic"><use href="#play"/></svg>Actions</a>
        <a><svg class="ic"><use href="#table"/></svg>Projects</a>
        <a><svg class="ic"><use href="#book"/></svg>Wiki</a>
        <a><svg class="ic"><use href="#shield"/></svg>Security</a>
        <a><svg class="ic"><use href="#graph"/></svg>Insights</a>
        <a><svg class="ic"><use href="#gear"/></svg>Settings</a>
      </nav>
    </header>

    <div class="repo">
      <div class="repo-head">
        <svg width="24" height="24"><use href="#identicon"/></svg>
        <h1>backendapp</h1><span class="pill">Public</span>
        <div class="repo-actions">
          <div class="btn sm w-pin"><svg class="ic"><use href="#pin"/></svg>Pin</div>
          <div class="btn sm w-watch"><svg class="ic"><use href="#eye"/></svg>Watch<em>0</em><svg class="ic"><use href="#tri"/></svg></div>
          <div class="split"><div class="btn sm w-fork off"><svg class="ic"><use href="#fork"/></svg>Fork<em>0</em></div><div class="btn sm w-fdrop"><svg class="ic"><use href="#tri"/></svg></div></div>
          <div class="split"><div class="btn sm w-star"><svg class="ic"><use href="#star"/></svg>Star<em>0</em></div><div class="btn sm w-sdrop"><svg class="ic"><use href="#tri"/></svg></div></div>
        </div>
      </div>

      <div class="columns">
        <section class="main-col">
          <div class="filebar">
            <div class="btn w-branch"><svg class="ic"><use href="#branch"/></svg>feature-backend<svg class="ic"><use href="#tri"/></svg></div>
            <div class="ref branches"><svg class="ic"><use href="#branch"/></svg><span><b>1</b> Branch</span></div>
            <div class="ref"><svg class="ic"><use href="#tag"/></svg><span><b>0</b> Tags</span></div>
            <div class="goto"><svg class="ic"><use href="#search"/></svg><span>Go to file</span><kbd>t</kbd></div>
            <div class="btn w-add">Add file<svg class="ic"><use href="#tri"/></svg></div>
            <div class="btn w-code"><svg class="ic"><use href="#code"/></svg>Code<svg class="ic"><use href="#tri"/></svg></div>
          </div>
          <div class="files">
            <div class="commit">
              <svg class="cavatar" width="20" height="20" viewBox="0 0 20 20"><circle cx="10" cy="10" r="10" fill="#f0f0f0"/><path d="M5.500 5Q7 5 8 6H12Q13 5 14.500 5L14.700 7.500Q16 9 15 11.500Q14 13.300 12 13.500Q12.700 14.500 12.500 19H7.700V16.500Q5.500 17 4.500 14.500Q6 15.500 7.500 15L8 13.500Q6 13.300 5 11.500Q4 9 5.300 7.500Z" fill="#c6c6c6"/></svg>
              <b>Dharshini</b><span class="cmsg">Add .gitignore</span>
              <span class="hash">78c7ed3 · 5 minutes ago</span>
              <span class="commits"><svg class="ic"><use href="#history"/></svg>4 Commits</span>
            </div>
            <div class="row"><svg class="ic"><use href="#file"/></svg><a>.env</a><span>Initial commit: add backend project files</span><time>3 hours ago</time></div>
            <div class="row"><svg class="ic"><use href="#file"/></svg><a>.gitignore</a><span>Add .gitignore</span><time>5 minutes ago</time></div>
            <div class="row"><svg class="ic"><use href="#file"/></svg><a>server.js</a><span>Initial commit: add backend project files</span><time>3 hours ago</time></div>
            <div class="row"><svg class="ic"><use href="#file"/></svg><a>serverlogin.js</a><span>Initial commit: add backend project files</span><time>3 hours ago</time></div>
            <div class="row"><svg class="ic"><use href="#file"/></svg><a>swagger.json</a><span>Initial commit: add backend project files</span><time>3 hours ago</time></div>
          </div>
          <div class="readme">
            <div class="readme-head"><div class="readme-tab"><svg class="ic"><use href="#book"/></svg>README</div></div>
            <div class="readme-body"><svg width="32" height="32"><use href="#book-lg"/></svg></div>
          </div>
        </section>

        <aside class="side">
          <div class="about">
            <div class="side-title"><h2>About</h2><svg class="ic"><use href="#gear"/></svg></div>
            <p class="desc">No description, website, or topics provided.</p>
            <ul>
              <li><svg class="ic"><use href="#pulse"/></svg><span>Activity</span></li>
              <li><svg class="ic"><use href="#star"/></svg><span><b>0</b> stars</span></li>
              <li><svg class="ic"><use href="#eye"/></svg><span><b>0</b> watching</span></li>
              <li><svg class="ic"><use href="#fork"/></svg><span><b>0</b> forks</span></li>
            </ul>
          </div>
          <div class="side-block"><h2>Releases</h2><p>No releases published</p><a>Create a new release</a></div>
          <div class="side-block"><h2>Packages</h2><p>No packages published</p><a>Publish your first package</a></div>
          <div class="side-end"></div>
        </aside>
      </div>
    </div>
  </div>
  <div class="scrollbar"><i class="up"></i><i class="thumb"></i><i class="down"></i></div>
  </div>
</main>
</div>
</body>
</html>
```
FILE: styles.css
```css
* { box-sizing: border-box; }
body { margin: 0; width: 1366px; height: 768px; overflow: hidden; display: flex; flex-direction: column; background: #131313; font-family: "Noto Sans", "Open Sans", sans-serif; font-size: 14px; line-height: 20px; color: #f0f6fc; }
svg { display: block; flex: none; }
.sprite { position: absolute; }
button { padding: 0; border: 0; background: none; color: inherit; font: inherit; }
h1, h2, p, ul { margin: 0; padding: 0; }
i, em { font-style: normal; }
b, h1, h2 { font-weight: 700; }
.ic { width: 16px; height: 16px; fill: currentColor; color: #9198a1; }

/* system bar */
.sysbar { height: 32px; flex: none; display: grid; grid-template-columns: 1fr auto 1fr; align-items: center; background: #131313; }
.workspaces { display: flex; align-items: center; gap: 6px; padding-left: 15px; }
.ws-active { width: 29px; height: 8px; border-radius: 4px; background: #f2f2f2; }
.ws-dot { width: 6px; height: 6px; border-radius: 3px; background: #7c7c7c; }
.clock { display: flex; gap: 16px; margin: -2px 0 0 47px; width: 111px; font-size: 14px; letter-spacing: -.1px; color: #f2f2f2; white-space: nowrap; }
.tray { display: flex; align-items: center; justify-content: flex-end; padding-right: 16px; }
.tray-sync { margin-right: 31px; }
.tray-teams { margin-right: 31px; }
.tray-net { margin-right: 12px; }
.tray-vol { margin-right: 12px; }
.teams-t { font: 700 18px "Noto Sans", sans-serif; fill: #fff; }

/* dock */
.desktop { flex: 1; min-height: 0; display: flex; }
.dock { width: 46px; padding-top: 4px; display: flex; flex-direction: column; background: linear-gradient(#171717, #1a1a1a 75%, #151515); }
.app { position: relative; height: 44px; flex: none; display: flex; align-items: center; justify-content: center; }
.app.on::before { content: ""; position: absolute; left: 3px; top: 20px; width: 4px; height: 4px; border-radius: 2px; background: #d9481c; }
.app.two::before { top: 17px; box-shadow: 0 5px #d9481c; }
.app-focus { width: 40px; height: 40px; border-radius: 10px; background: #434343; display: flex; align-items: center; justify-content: center; }
.app-badge { position: absolute; left: 23px; top: 4px; width: 17px; height: 17px; border-radius: 9px; background: #0b6b17; font-size: 10px; line-height: 17px; text-align: center; font-weight: 400; }
.dock-line { height: 1px; flex: none; margin: 1px 9px; background: #4c4c4c; }
.launcher { margin-top: auto; margin-bottom: 4px; }
.software-a { font: 700 18px "Noto Sans", sans-serif; fill: #fff; }

/* browser chrome */
.browser { flex: 1; min-width: 0; display: flex; flex-direction: column; background: #242d24; }
.tabstrip { height: 40px; flex: none; display: flex; align-items: center; padding-left: 6px; background: #242d24; color: #b3c7ab; }
.tab-search { width: 28px; height: 28px; margin-right: 4px; border-radius: 10px; background: #393e37; display: flex; align-items: center; justify-content: center; }
.tab { width: 65px; height: 16px; flex: none; padding-left: 10px; display: flex; align-items: center; gap: 8px; border-right: 1px solid #42473f; fill: #fff; }
.tab.slim { width: 64px; }
.tab.last { width: 63px; border: 0; }
.tab svg { width: 16px; height: 16px; }
.tab.oa { fill: #dedede; }
.tab.oa svg { width: 14px; margin: 0 1px; }
.tab.od { fill: #ccc; }
.tab span { width: 20px; overflow: hidden; white-space: nowrap; mask-image: linear-gradient(90deg, #000 55%, transparent); }
.tab-active { position: relative; width: 58px; height: 34px; align-self: flex-end; padding: 0 0 6px 8px; display: flex; align-items: center; gap: 13px; border-radius: 10px 10px 0 0; background: #323f2e; fill: #fff; }
.tab-active::before, .tab-active::after { content: ""; position: absolute; bottom: 0; width: 10px; height: 10px; }
.tab-active::before { left: -10px; background: radial-gradient(circle at 0 0, transparent 9.5px, #323f2e 10px); }
.tab-active::after { right: -10px; background: radial-gradient(circle at 100% 0, transparent 9.5px, #323f2e 10px); }
.new-tab { margin-left: 14px; }
.win-controls { margin-left: auto; display: flex; gap: 20.500px; padding-right: 12px; }
.toolbar { height: 47px; flex: none; display: flex; align-items: center; border-bottom: 1px solid #4a5148; border-radius: 8px 8px 0 0; background: #323f2e; }
.tb-back { margin-left: 16px; }
.tb-fwd { margin-left: 22px; }
.tb-reload { margin-left: 22px; }
.omnibox { width: 1116px; height: 34px; margin-left: 18px; padding: 0 16px 0 5px; display: flex; align-items: center; border-radius: 17px; background: #1d2819; }
.site-info { width: 24px; height: 24px; border-radius: 12px; background: #323f2e; display: flex; align-items: center; justify-content: center; }
.url { margin-left: 8px; font-size: 14px; white-space: nowrap; color: #b5c3ad; letter-spacing: -.2px; }
.host { color: #e1e8dc; }
.install { margin-left: auto; }
.bookmark { margin-left: 15px; }
.profile { width: 20px; height: 20px; margin-left: 16px; border-radius: 10px; background: #000; }
.kebab { margin-left: 24px; }

/* page */
.viewport { flex: 1; min-height: 0; display: flex; }
.page { width: 1305px; overflow: hidden; background: #0d1117; }
.scrollbar { width: 15px; display: flex; flex-direction: column; align-items: center; background: #2c2c2c; }
.up { margin-top: 6px; border: 4.500px solid transparent; border-top: 0; border-bottom: 5px solid #a0a0a0; }
.thumb { width: 9px; height: 294px; margin-top: 7px; border-radius: 5px; background: #9f9f9f; }
.down { margin-top: auto; margin-bottom: 7px; border: 4.500px solid transparent; border-bottom: 0; border-top: 5px solid #a0a0a0; }

.gh-header { height: 104px; background: #010409; border-bottom: 1px solid #3d444d; }
.gh-top { height: 64px; padding: 0 17px 0 16px; display: flex; align-items: center; }
.sq { width: 32px; height: 32px; flex: none; display: flex; align-items: center; justify-content: center; border: 1px solid #3d444d; border-radius: 6px; }
.sq + .sq { margin-left: 8px; }
.gh-logo { margin-left: 13px; fill: #f0f6fc; }
.crumbs { margin-left: 15px; display: flex; }
.crumbs i { margin: 0 11px; color: #9198a1; }
.gh-search { width: 260px; height: 32px; margin-left: auto; padding-left: 8px; display: flex; align-items: center; border: 1px solid #3d444d; border-radius: 6px; color: #9198a1; }
.gh-search .ic { margin-right: 7px; }
.gh-search kbd { width: 16px; height: 16px; margin: 3px 4px 0; border: 1px solid #9198a1; border-radius: 3px; font: 12px/14px "Noto Sans", sans-serif; text-align: center; }
.copilot { width: 56px; height: 32px; margin-left: 8px; display: flex; border: 1px solid #3d444d; border-radius: 6px; }
.copilot span { display: flex; align-items: center; justify-content: center; width: 31px; }
.copilot span + span { width: 24px; border-left: 1px solid #3d444d; }
.vsep { width: 1px; height: 20px; margin: 0 12px; background: #3d444d; }
.create { width: 50px; gap: 4px; }
.create .ic + .ic { margin-top: 2px; }
.avatar { margin-left: 9px; }
.gh-nav { height: 40px; padding: 0 16px; display: flex; gap: 8px; }
.gh-nav a { height: 39px; padding: 0 8px 7px; display: flex; align-items: center; }
.gh-nav .ic { margin-right: 9px; }
.gh-nav .current { padding-bottom: 5px; font-weight: 700; border-bottom: 2px solid #f78166; }
.gh-nav .current .ic { margin-right: 8px; }

.repo { width: 1216px; margin-left: 45px; }
.repo-head { height: 63px; display: flex; align-items: center; border-bottom: 1px solid #3d444d; }
.repo-head h1 { margin-left: 8px; font-size: 20px; line-height: 30px; }
.pill { height: 20px; margin-left: 8px; padding: 0 6px; border: 1px solid #3d444d; border-radius: 10px; font-size: 12px; line-height: 17px; color: #9198a1; }
.repo-actions { margin-left: auto; margin-top: -3px; display: flex; gap: 8px; }
.btn { height: 32px; flex: none; display: flex; align-items: center; border: 1px solid #3d444d; border-radius: 6px; background: #212830; white-space: nowrap; }
.btn.sm { height: 28px; font-size: 12px; }
.btn em { width: 20px; height: 20px; border-radius: 10px; background: #2f3742; text-align: center; }
.split { display: flex; }
.split .btn:first-child { border-radius: 6px 0 0 6px; border-right: 0; }
.split .btn:last-child { border-radius: 0 6px 6px 0; justify-content: center; }
.w-pin { width: 68px; padding-left: 12px; gap: 8px; }
.w-watch { width: 118px; padding-left: 8px; }
.w-watch .ic:first-child { margin-right: 3px; }
.w-watch em { margin: 0 4px 0 9px; }
.w-fork { width: 100px; padding-left: 12px; }
.w-fork .ic { margin: -2px 8px 0 0; }
.w-fork em { margin-left: 5px; }
.off { color: #656c76; border-color: #262d35; }
.off .ic { color: #656c76; }
.off em { background: #2a313b; }
.w-fdrop, .w-sdrop { width: 34px; }
.w-star { width: 101px; padding-left: 12px; }
.w-star .ic { margin: -2px 11px 0 0; }
.w-star em { margin-left: 6px; }

.columns { display: flex; gap: 24px; padding-top: 24px; }
.main-col { width: 896px; }
.filebar { height: 32px; display: flex; align-items: center; }
.w-branch { width: 181px; padding-left: 12px; }
.w-branch .ic:first-child { margin: 2px 7px 0 0; }
.w-branch .ic:last-child { margin-left: 8px; }
.ref { display: flex; align-items: center; color: #9198a1; margin-left: 10px; }
.ref .ic { margin-right: 8px; }
.ref b { color: #f0f6fc; }
.branches { margin-left: 13px; }
.goto { width: 269px; height: 32px; margin: 0 8px 0 auto; padding: 0 8px; display: flex; align-items: center; border: 1px solid #3d444d; border-radius: 6px; color: #9198a1; }
.goto .ic { margin: 2px 8px 0 0; }
.goto kbd { width: 17px; height: 20px; margin-left: auto; border: 1px solid #2f363e; border-bottom-width: 2px; border-radius: 6px; background: #151b23; color: #f0f6fc; font: 12px/17px "Noto Sans", sans-serif; text-align: center; }
.w-add { width: 96px; padding-left: 12px; }
.w-add .ic { margin: 3px 0 0 8px; }
.w-code { width: 108px; margin-left: 8px; padding-left: 12px; background: #29903b; border-color: #479f53; }
.w-code .ic { color: #fff; }
.w-code .ic:first-child { margin-right: 8px; }
.w-code .ic:last-child { margin-left: 8px; }

.files { margin-top: 16px; border: 1px solid #3d444d; border-radius: 6px; overflow: hidden; }
.commit { height: 52px; padding: 0 21px 0 13px; display: flex; align-items: center; background: #151b23; }
.commit b { margin: 2px 8px 0; }
.cmsg { margin-top: 2px; color: #9198a1; }
.hash { margin-left: auto; font-size: 12px; color: #9198a1; }
.commits { margin-left: 17px; display: flex; align-items: center; gap: 4px; font-size: 12px; }
.row { height: 41px; padding: 0 16px; display: grid; grid-template-columns: 25.500px 331.500px 1fr auto; align-items: center; border-top: 1px solid #3d444d; }
.row .ic { margin-top: -1px; }
.row a, .row span, .row time { padding-top: 1px; }
.row span, .row time { color: #9198a1; }
.readme { height: 200px; margin-top: 16px; border: 1px solid #3d444d; border-radius: 6px; }
.readme-head { height: 48px; padding-left: 7px; border-bottom: 1px solid #3d444d; }
.readme-tab { width: 99px; height: 48px; padding-left: 9px; display: flex; align-items: center; gap: 8px; border-bottom: 2px solid #f78166; font-weight: 700; font-size: 13.500px; }
.readme-body { padding-top: 31px; display: flex; justify-content: center; fill: #9198a1; color: #9198a1; }

.side { width: 296px; color: #9198a1; }
.side h2 { font-size: 16px; line-height: 24px; color: #f0f6fc; }
.about { height: 233px; padding-top: 4px; border-bottom: 1px solid #2f353d; }
.side-title { display: flex; align-items: center; justify-content: space-between; }
.desc { margin-top: 16px; font-size: 16px; line-height: 24px; font-style: italic; }
.side ul { list-style: none; margin-top: 12px; }
.side li { height: 29px; padding-top: 1px; display: flex; align-items: center; gap: 11px; }
.side li .ic { margin-top: 2px; }
.side-block { height: 109px; padding-top: 16px; border-bottom: 1px solid #2f353d; font-size: 12px; line-height: 18px; }
.side-block p { margin-top: 15px; }
.side-block a { color: #4f8cf7; text-decoration: underline; text-underline-offset: 3px; }
.side-end { height: 16px; }
```
